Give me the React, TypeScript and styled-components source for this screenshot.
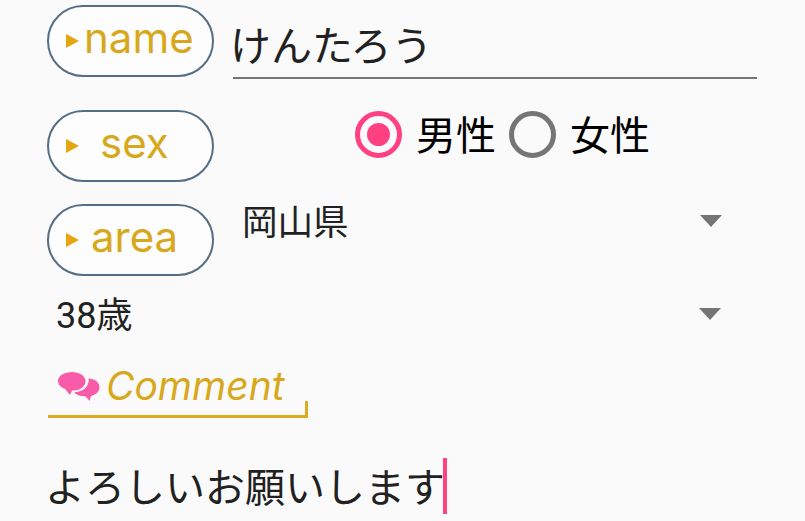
import React from "react";
import styled, { createGlobalStyle } from "styled-components";

const Global = createGlobalStyle`
  html, body { margin: 0; padding: 0; background: #fafafa; height: 521px; overflow: hidden; }
  * { box-sizing: border-box; }
`;
const cjk = `"Roboto", "Noto Sans CJK JP", sans-serif`;
const Page = styled.div`
  width: 805px; height: 521px; overflow: hidden; padding: 5px 48px 0 47px; font-family: ${cjk};
`;
const Row = styled.div<{ $h: number }>`
  display: flex; align-items: flex-start; height: ${p => p.$h}px;
`;
const Pill = styled.div<{ $gap: number }>`
  width: 167px; height: 72px; flex: none; border: 2.5px solid #546e85; border-radius: 36px; background: #fdfdfd;
  display: flex; align-items: center; padding-left: 17px; gap: ${p => p.$gap}px;
  color: #d8a81c; font: 400 42px/1 "Inter", sans-serif;
`;
const PillText = styled.span`
  margin-bottom: 6px;
`;
const Arrow = styled.span`
  flex: none; width: 0; height: 0; border-left: 13px solid #e5a50d; border-top: 7.5px solid transparent; border-bottom: 7.5px solid transparent;
`;
const NameField = styled.div`
  margin: 14px 0 0 19px; width: 524px; height: 60px; border-bottom: 2px solid #757575;
  font-size: 41px; line-height: 56px; color: #212121; white-space: nowrap; text-indent: -3px;
`;
const RadioGroup = styled.div`
  display: flex; align-items: center; height: 48px; margin: 0 0 0 141px; font-size: 40px; color: #000;
`;
const Circle = styled.span<{ $on?: boolean }>`
  flex: none; width: 47px; height: 47px; border-radius: 50%; border: 5px solid ${p => p.$on ? "#ff4081" : "#757575"};
  display: flex; align-items: center; justify-content: center;
`;
const Dot = styled.span`
  width: 23px; height: 23px; border-radius: 50%; background: #ff4081;
`;
const RadioLabel = styled.span<{ $l: number; $r: number }>`
  margin: 5px ${p => p.$r}px 0 ${p => p.$l}px; line-height: 48px; white-space: nowrap;
`;
const Select = styled.div<{ $ml: number; $w: number; $mt: number; $size: number }>`
  margin: ${p => p.$mt}px 0 0 ${p => p.$ml}px; width: ${p => p.$w}px; height: 44px; display: flex; align-items: center;
  justify-content: space-between; font-size: ${p => p.$size}px; color: #212121; white-space: nowrap;
`;
const SelectText = styled.span`
  margin-bottom: 4px;
`;
const Caret = styled.span`
  flex: none; width: 0; height: 0; border-top: 12px solid #757575; border-left: 11px solid transparent; border-right: 11px solid transparent;
`;
const CommentHead = styled.div`
  margin-left: 1px; width: 260px; height: 68px; border-bottom: 3px solid #dcab22;
  display: flex; align-items: flex-start; padding: 14px 0 0 10px; gap: 6px; position: relative;
  color: #d8a81c; font: italic 400 39px/44px "Inter", sans-serif; white-space: nowrap;
  svg { margin-top: 8px; flex: none; }
  &::after { content: ""; position: absolute; right: 0; bottom: 0; width: 3px; height: 14px; background: #dcab22; }
`;
const CommentText = styled.div`
  margin: 40px 0 0 -2px; display: flex; align-items: center; height: 56px; font-size: 40px; color: #212121; white-space: nowrap;
`;
const CommentValue = styled.span`
  margin: 0 -2px 3px 0;
`;
const TextCaret = styled.span`
  display: inline-block; width: 3.5px; height: 56px; background: #ff4081; flex: none;
`;

export default function App() {
  return (
    <Page>
      <Global />
      <Row $h={105}>
        <Pill $gap={5}><Arrow /><PillText>name</PillText></Pill>
        <NameField>けんたろう</NameField>
      </Row>
      <Row $h={94}>
        <Pill $gap={21}><Arrow /><PillText>sex</PillText></Pill>
        <RadioGroup>
          <Circle $on><Dot /></Circle>
          <RadioLabel $l={14} $r={13}>男性</RadioLabel>
          <Circle />
          <RadioLabel $l={14} $r={0}>女性</RadioLabel>
        </RadioGroup>
      </Row>
      <Row $h={93}>
        <Pill $gap={12}><Arrow /><PillText>area</PillText></Pill>
        <Select $ml={28} $w={480} $mt={-5} $size={35.5}><SelectText>岡山県</SelectText><Caret /></Select>
      </Row>
      <Row $h={53}>
        <Select $ml={9} $w={665} $mt={-5} $size={36}><SelectText>38歳</SelectText><Caret /></Select>
      </Row>
      <CommentHead>
        <svg width="42" height="29" viewBox="0 0 42 29">
          <path fill="#f85ca8" d="M14 0C6.500 0 0 3.800 0 9c0 3.500 2.800 6.500 7 8l5 6 2-4.500c1 .1 1.500.1 2 0 6.500 0 11.500-4.300 11.500-9.500S21 0 14 0z" />
          <path fill="#f85ca8" d="M30 6.500c5.800 0 11.500 2.800 11.500 9 0 4.300-4 7.500-8.500 8.500l-1.500 5-4-4.800c-5 .2-9-1.200-11.500-4 8-.2 14.500-4.500 14.800-12.500z" />
        </svg>
        Comment
      </CommentHead>
      <CommentText><CommentValue>よろしいお願いします</CommentValue><TextCaret /></CommentText>
    </Page>
  );
}
